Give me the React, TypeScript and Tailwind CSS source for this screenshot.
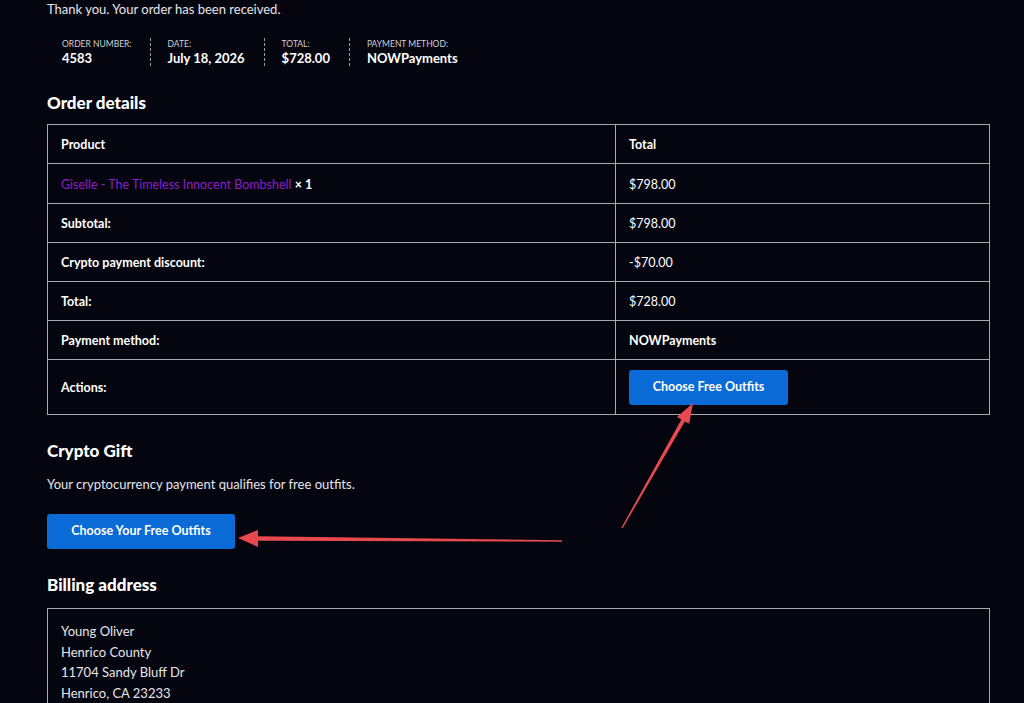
import React from "react";

const overview = [
  { label: "Order number:", value: "4583" },
  { label: "Date:", value: "July 18, 2026" },
  { label: "Total:", value: "$728.00" },
  { label: "Payment method:", value: "NOWPayments" },
];

const totals = [
  { label: "Subtotal:", value: "$798.00" },
  { label: "Crypto payment discount:", value: "-$70.00" },
  { label: "Total:", value: "$728.00" },
  { label: "Payment method:", value: "NOWPayments", bold: true },
];

const Arrows = () => (
  <svg className="absolute left-0 top-0 pointer-events-none" width="1024" height="703" viewBox="0 0 1024 703">
    {/* arrow pointing to table button */}
    <polygon
      points="693,403 689.2,423.8 684.8,421.4 622.6,528.3 621.4,527.7 681.4,419.4 677,416.9"
      fill="#e8494f"
    />
    {/* arrow pointing to gift button */}
    <polygon
      points="238,538 258,530 258,536.3 562,540.3 562,541.7 258,540.7 258,547"
      fill="#e8494f"
    />
  </svg>
);

const App = () => {
  return (
    <div
      className="relative h-[703px] w-full overflow-hidden bg-[#05050f] text-[#e6e6ea]"
      style={{ fontFamily: "Lato, 'Open Sans', sans-serif" }}
    >
      <div className="pl-[47px] pr-[34px]">
        <p className="text-[13px] leading-[18px]">Thank you. Your order has been received.</p>

        <ul className="mt-[20px] flex">
          {overview.map((item, i) => (
            <li
              key={item.label}
              className={
                i === 0
                  ? "pl-[15px] pr-[18px]"
                  : "border-l border-dashed border-[#9a9aa2] pl-[17px] pr-[19px]"
              }
            >
              <div className="text-[8.5px] uppercase leading-[12px] text-[#d0d0d6]">{item.label}</div>
              <div className="text-[13px] font-bold leading-[16px] text-white">{item.value}</div>
            </li>
          ))}
        </ul>

        <h2 className="mt-[25px] text-[17px] font-black leading-[24px] text-white">Order details</h2>

        <table className="mt-[9px] w-[943px] border-collapse text-[12.5px] text-white">
          <thead>
            <tr className="h-[39px]">
              <th className="w-[568px] border border-[#a8a8b0] pl-[13px] pt-[3px] text-left font-bold">Product</th>
              <th className="border border-[#a8a8b0] pl-[13px] pt-[3px] text-left font-bold">Total</th>
            </tr>
          </thead>
          <tbody>
            <tr className="h-[40px]">
              <td className="border border-[#a8a8b0] pl-[13px] pt-[3px]">
                <a className="text-[#8a1fc9]">Giselle - The Timeless Innocent Bombshell</a>{" "}
                <strong className="font-bold">× 1</strong>
              </td>
              <td className="border border-[#a8a8b0] pl-[13px] pt-[3px]">$798.00</td>
            </tr>
            {totals.map((row) => (
              <tr key={row.label} className="h-[39px]">
                <th className="border border-[#a8a8b0] pl-[13px] pt-[3px] text-left font-bold">{row.label}</th>
                <td className={`border border-[#a8a8b0] pl-[13px] pt-[3px] ${row.bold ? "font-bold" : ""}`}>
                  {row.value}
                </td>
              </tr>
            ))}
            <tr className="h-[55px]">
              <th className="border border-[#a8a8b0] pl-[13px] pt-[2px] text-left font-bold">Actions:</th>
              <td className="border border-[#a8a8b0] pl-[13px]">
                <button className="h-[35px] w-[159px] rounded-[3px] bg-[#0a6ad6] text-[12.5px] font-bold text-white">
                  Choose Free Outfits
                </button>
              </td>
            </tr>
          </tbody>
        </table>

        <h2 className="mt-[24px] text-[17px] font-black leading-[24px] text-white">Crypto Gift</h2>
        <p className="mt-[12px] text-[13px] leading-[18px]">Your cryptocurrency payment qualifies for free outfits.</p>
        <button className="mt-[21px] h-[35px] w-[188px] rounded-[3px] bg-[#0a6ad6] text-[12.5px] font-bold text-white">
          Choose Your Free Outfits
        </button>

        <h2 className="mt-[24px] text-[17px] font-black leading-[24px] text-white">Billing address</h2>
        <address className="mt-[11px] w-[943px] border border-[#a8a8b0] pb-[40px] pl-[13px] pt-[12px] text-[13px] not-italic leading-[20.5px]">
          Young Oliver
          <br />
          Henrico County
          <br />
          11704 Sandy Bluff Dr
          <br />
          Henrico, CA 23233
        </address>
      </div>
      <Arrows />
    </div>
  );
};

export default App;
